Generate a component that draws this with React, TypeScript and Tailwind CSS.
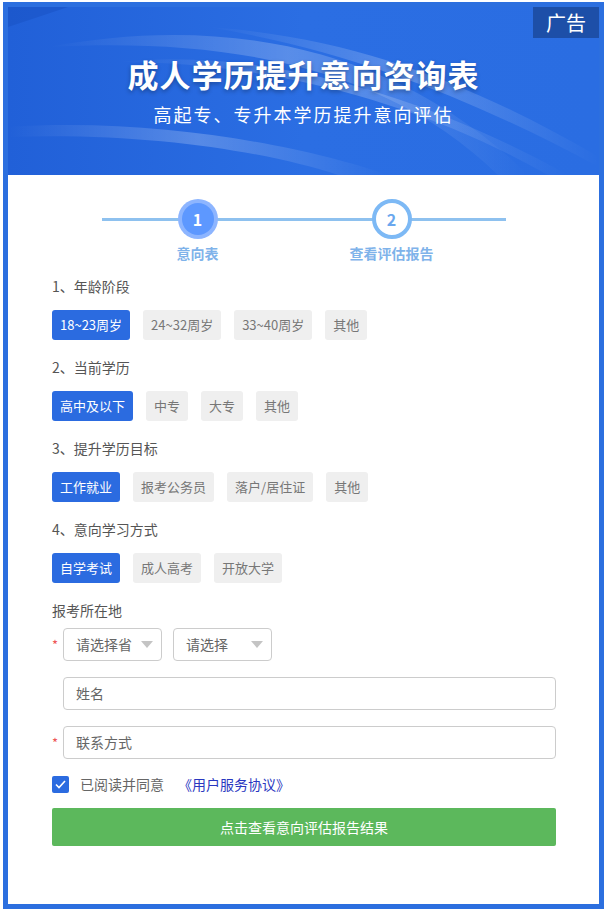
import React, { useState } from 'react'

const font = { fontFamily: '"Noto Sans CJK SC", "Noto Sans", sans-serif' }

type Q = { title: string; options: string[] }

const questions: Q[] = [
  { title: '1、年龄阶段', options: ['18~23周岁', '24~32周岁', '33~40周岁', '其他'] },
  { title: '2、当前学历', options: ['高中及以下', '中专', '大专', '其他'] },
  { title: '3、提升学历目标', options: ['工作就业', '报考公务员', '落户/居住证', '其他'] },
  { title: '4、意向学习方式', options: ['自学考试', '成人高考', '开放大学'] },
]

function Banner() {
  return (
    <div className="relative h-[168px] overflow-hidden bg-gradient-to-r from-[#2160d8] via-[#2b6ee3] to-[#2a6de2]">
      <svg className="absolute inset-0" width="591" height="168" viewBox="0 0 591 168">
        <defs>
          <linearGradient id="sw" x1="0" y1="0" x2="1" y2="0">
            <stop offset="0" stopColor="#ffffff" stopOpacity="0" />
            <stop offset="0.5" stopColor="#ffffff" stopOpacity="0.22" />
            <stop offset="1" stopColor="#ffffff" stopOpacity="0" />
          </linearGradient>
        </defs>
        <path d="M0 0 L60 0 L0 20 Z" fill="#1b56c9" opacity="0.7" />
        <path d="M40 40 C200 10 380 30 520 168 L490 168 C380 60 220 30 40 40 Z" fill="url(#sw)" />
        <path d="M110 55 C260 40 420 90 560 168 L540 168 C420 100 270 55 110 55 Z" fill="url(#sw)" />
        <path d="M0 120 C150 110 300 140 380 168 L330 168 C260 145 140 125 0 130 Z" fill="url(#sw)" />
        <path d="M200 20 C350 30 470 80 591 150 L591 160 C470 95 350 45 200 20 Z" fill="url(#sw)" />
      </svg>
      <div className="absolute right-0 top-0 flex h-[31px] w-[66px] items-center justify-center bg-[#1d4fa8] text-[20px] text-white" style={font}>
        广告
      </div>
      <div className="relative flex flex-col items-center pt-[48px]" style={font}>
        <h1 className="text-[31px] font-bold leading-[38px] tracking-[1px] text-white [text-shadow:0_2px_4px_rgba(0,0,0,0.3)]">
          成人学历提升意向咨询表
        </h1>
        <p className="mt-[8px] text-[18px] leading-[26px] tracking-[2px] text-white">高起专、专升本学历提升意向评估</p>
      </div>
    </div>
  )
}

function Steps() {
  return (
    <div className="relative mx-auto mb-[11px] mt-[24px] h-[66px] w-[404px]">
      <div className="absolute left-0 right-0 top-[19px] h-[3px] bg-[#8ec1ef]" />
      <div className="absolute left-[76px] top-0 flex h-[40px] w-[40px] items-center justify-center rounded-full bg-[#8db5ff]">
        <div className="flex h-[32px] w-[32px] items-center justify-center rounded-full bg-[#5d98ff] text-[16px] font-bold text-white" style={font}>
          1
        </div>
      </div>
      <div className="absolute left-[270px] top-0 flex h-[40px] w-[40px] items-center justify-center rounded-full border-[4px] border-[#7db9f5] bg-white text-[16px] font-bold text-[#6aa7ee]" style={font}>
        2
      </div>
      <div className="absolute left-[46px] top-[44px] w-[100px] text-center text-[14px] font-bold text-[#7fb3ea]" style={font}>
        意向表
      </div>
      <div className="absolute left-[230px] top-[44px] w-[120px] text-center text-[14px] font-bold text-[#7fb3ea]" style={font}>
        查看评估报告
      </div>
    </div>
  )
}

function Question({ q }: { q: Q }) {
  const [sel, setSel] = useState(0)
  return (
    <div>
      <div className="text-[14px] leading-[20px] text-[#555]">{q.title}</div>
      <div className="mt-[14px] flex gap-[13px]">
        {q.options.map((o, i) => (
          <button
            key={o}
            onClick={() => setSel(i)}
            className={
              i === sel
                ? 'h-[30px] rounded-[3px] bg-[#2b6be0] px-[8px] text-[13px] text-white'
                : 'h-[30px] rounded-[3px] bg-[#efefef] px-[8px] text-[13px] text-[#777]'
            }
          >
            {o}
          </button>
        ))}
      </div>
    </div>
  )
}

function Caret() {
  return (
    <svg width="12" height="7" viewBox="0 0 12 7">
      <path d="M0 0 L12 0 L6 7 Z" fill="#c4c4c4" />
    </svg>
  )
}

export default function App() {
  const [agree, setAgree] = useState(true)
  return (
    <div className="min-h-[916px] bg-white pl-[3px] pt-[2px]" style={font}>
      <div className="h-[907px] w-[601px] border-[5px] border-[#2c6fdf] bg-white">
        <Banner />
        <Steps />
        <div className="px-[44px] pr-[43px]">
          <div className="mt-[2px] flex flex-col gap-[17px]">
            {questions.map((q) => (
              <Question key={q.title} q={q} />
            ))}
          </div>
          <div className="mt-[17px] text-[14px] leading-[20px] text-[#555]">报考所在地</div>
          <div className="mt-[8px] flex items-center">
            <span className="w-[11px] text-[13px] text-[#e55]">*</span>
            <div className="flex h-[33px] w-[99px] items-center justify-between rounded-[4px] border border-[#ccc] pl-[12px] pr-[8px] text-[14px] text-[#666]">
              请选择省 <Caret />
            </div>
            <div className="ml-[11px] flex h-[33px] w-[99px] items-center justify-between rounded-[4px] border border-[#ccc] pl-[12px] pr-[8px] text-[14px] text-[#666]">
              请选择 <Caret />
            </div>
          </div>
          <div className="mt-[16px] flex items-center">
            <span className="w-[11px]" />
            <div className="flex h-[33px] flex-1 items-center rounded-[4px] border border-[#ccc] px-[12px] text-[14px] text-[#666]">姓名</div>
          </div>
          <div className="mt-[16px] flex items-center">
            <span className="w-[11px] text-[13px] text-[#e55]">*</span>
            <div className="flex h-[33px] flex-1 items-center rounded-[4px] border border-[#ccc] px-[12px] text-[14px] text-[#666]">联系方式</div>
          </div>
          <div className="mt-[15px] flex items-center text-[14px]">
            <button
              onClick={() => setAgree(!agree)}
              className={agree ? 'flex h-[17px] w-[17px] items-center justify-center rounded-[2px] bg-[#2b6be0]' : 'h-[17px] w-[17px] rounded-[2px] border border-[#ccc]'}
            >
              {agree && (
                <svg width="11" height="9" viewBox="0 0 11 9">
                  <path d="M1 4.5 L4 7.5 L10 1" stroke="white" strokeWidth="1.6" fill="none" />
                </svg>
              )}
            </button>
            <span className="ml-[11px] text-[#666]">已阅读并同意</span>
            <span className="ml-[14px] text-[#2a37c0]">《用户服务协议》</span>
          </div>
          <button className="mt-[13px] h-[38px] w-full rounded-[2px] bg-[#5cb85c] text-[14px] text-white">点击查看意向评估报告结果</button>
        </div>
      </div>
    </div>
  )
}
